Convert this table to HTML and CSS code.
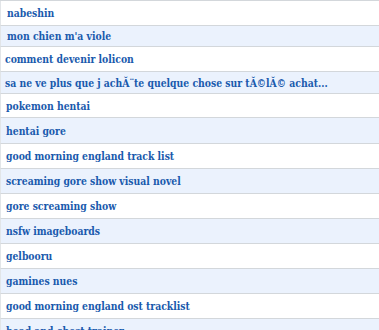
FILE: index.html
```html
<!DOCTYPE html>
<html>
<head>
<meta charset="utf-8">
<link rel="stylesheet" href="styles.css">
</head>
<body>
<ul class="list">
  <li class="row odd h25"><a class="lnk pl7">nabeshin</a></li>
  <li class="row even h21"><a class="lnk pl7">mon chien m'a viole</a></li>
  <li class="row odd h25"><a class="lnk pl5">comment devenir lolicon</a></li>
  <li class="row even h22"><a class="lnk pl5">sa ne ve plus que j achĂ¨te quelque chose sur tĂ©lĂ© achat...</a></li>
  <li class="row odd h24"><a class="lnk pl6">pokemon hentai</a></li>
  <li class="row even h26"><a class="lnk pl6">hentai gore</a></li>
  <li class="row odd h25"><a class="lnk pl6">good morning england track list</a></li>
  <li class="row even h25"><a class="lnk pl6">screaming gore show visual novel</a></li>
  <li class="row odd h25"><a class="lnk pl6">gore screaming show</a></li>
  <li class="row even h25"><a class="lnk pl6">nsfw imageboards</a></li>
  <li class="row odd h25"><a class="lnk pl6">gelbooru</a></li>
  <li class="row even h25"><a class="lnk pl6">gamines nues</a></li>
  <li class="row odd h25"><a class="lnk pl6">good morning england ost tracklist</a></li>
  <li class="row even h25"><a class="lnk pl6">head and chest trainer</a></li>
</ul>
</body>
</html>
```

FILE: styles.css
```css
html, body {
  margin: 0;
  padding: 0;
  background: #ffffff;
}
.list {
  list-style: none;
  margin: 0;
  padding: 0;
  border-top: 1px solid #d3d7db;
}
.row {
  display: flex;
  align-items: center;
  box-sizing: border-box;
  border-bottom: 1px solid #d3d7db;
  border-left: 1px solid #e2e5e8;
}
.odd { background: #ffffff; }
.even { background: #ebf2fd; }
.h21 { height: 21px; }
.h22 { height: 22px; }
.h24 { height: 24px; }
.h25 { height: 25px; }
.h26 { height: 26px; }
.lnk {
  font-family: "DejaVu Serif Condensed", "DejaVu Serif", serif;
  font-stretch: condensed;
  font-weight: bold;
  font-size: 10.3px;
  color: #1a5aad;
  text-decoration: none;
  white-space: nowrap;
}
.pl5 { padding-left: 4px; }
.pl6 { padding-left: 5px; }
.pl7 { padding-left: 6px; }
```
